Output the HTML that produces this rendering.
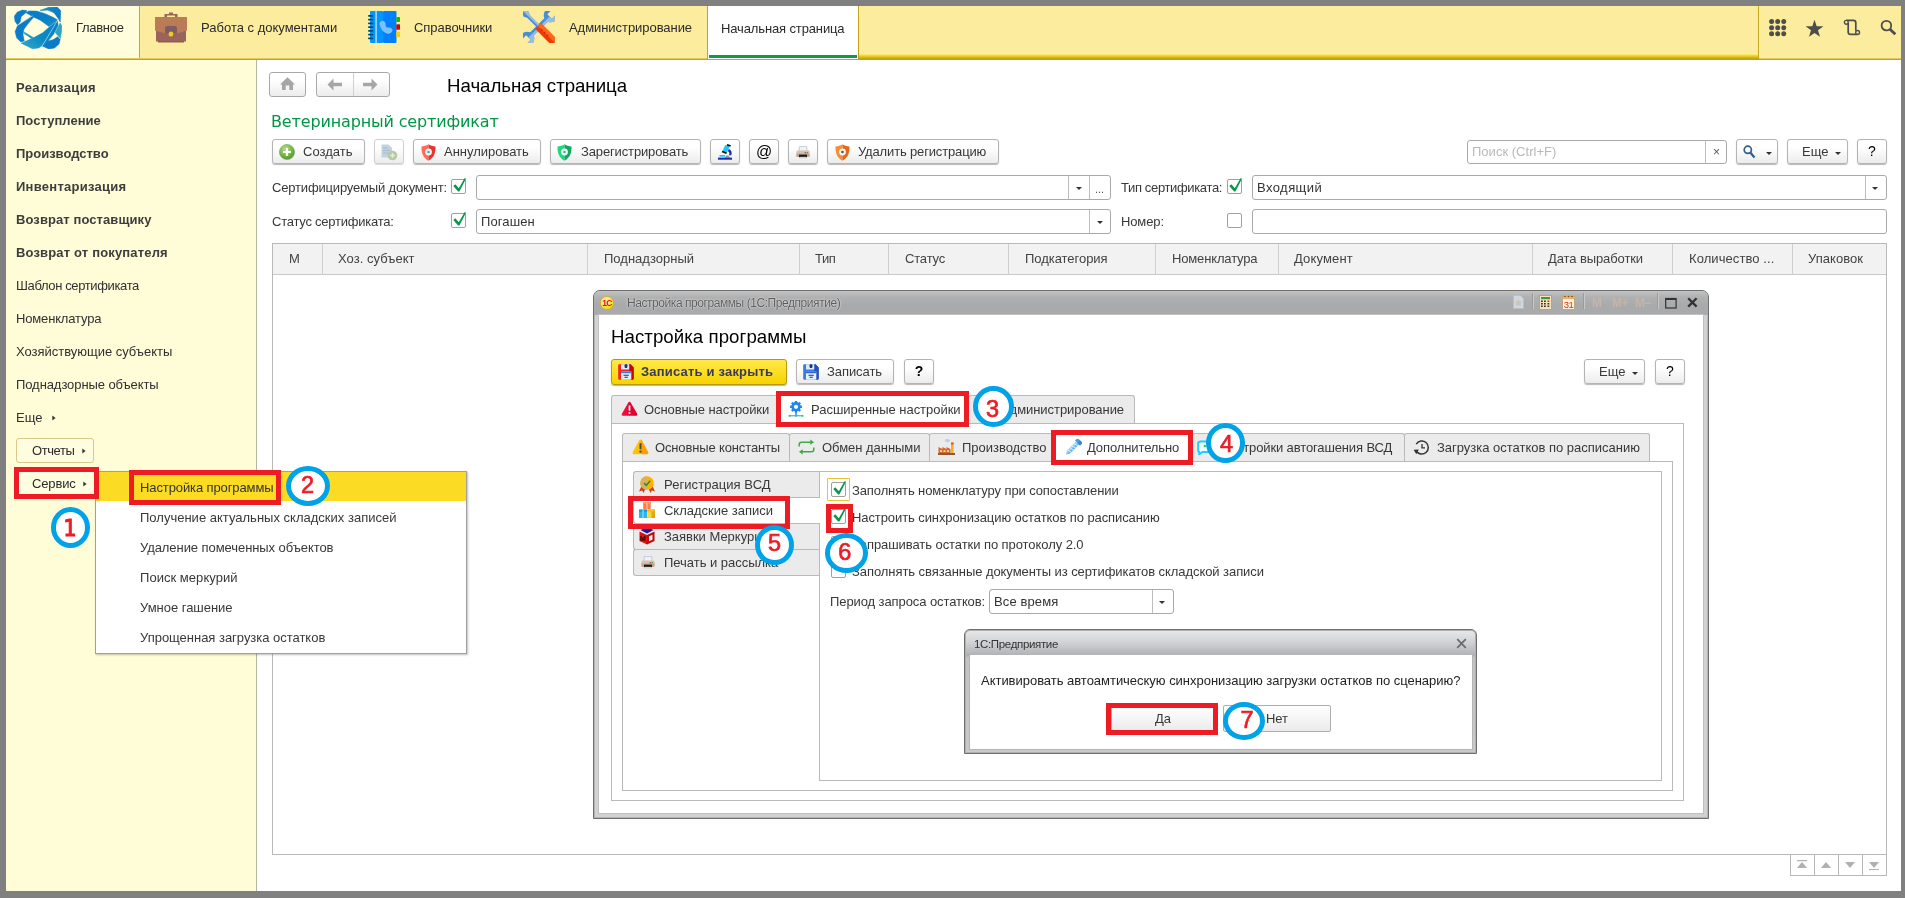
<!DOCTYPE html>
<html lang="ru"><head><meta charset="utf-8"><title>1С:Предприятие – Меркурий</title>
<style>
*{box-sizing:border-box;margin:0;padding:0}
html,body{width:1905px;height:898px;overflow:hidden;background:#808080}
body{position:relative;font-family:"Liberation Sans",sans-serif;font-size:13px;color:#2b2b2b;line-height:15px}
.a{position:absolute;white-space:nowrap}
#app{left:6px;top:6px;width:1895px;height:885px;background:#fff;overflow:hidden;will-change:transform}
/* top bar */
#top{left:0;top:0;width:1895px;height:54px;background:#fbec9e;border-bottom:1px solid #c4a21a;box-shadow:inset 0 -1px 0 #e2c95a}
#topshade{left:853px;top:48px;width:900px;height:5px;background:linear-gradient(#fdf0a8,#fadf2a 22%,#e6c81e 50%,#ccae10 80%,#b99d05)}
#main-tab{left:0;top:0;width:134px;height:52px;background:#fffddc;border-right:1px solid #c9a920}
.sec{top:14px;height:16px;line-height:16px;color:#2b2b2b}
#home-tab{left:701px;top:0;width:152px;height:53px;background:#fff;border-left:1px solid #c4a21a;border-right:1px solid #c4a21a}
#home-tab i{position:absolute;left:1px;right:1px;bottom:1px;height:3px;background:#0e9b45}
#tools{left:1752px;top:0;width:143px;height:52px;border-left:1px solid #c9a920}
/* sidebar */
#side{left:0;top:54px;width:251px;height:831px;background:#fffdd7;border-right:1px solid #b5b5a0}
.nav{left:10px;height:16px;line-height:16px;color:#303030}
.nav.b{font-weight:bold;color:#3d3d3d}
.sbtn{height:25px;border:1px solid #d9c98a;border-radius:3px;background:#fffde0;line-height:23px;padding-left:15px}
.tri{display:inline-block;margin-left:7px;vertical-align:1px}

/* main */
.btn{height:25px;border:1px solid #b4b4b4;border-radius:3px;background:linear-gradient(#fff 30%,#ececec);box-shadow:0 1px 1px rgba(0,0,0,.28);line-height:23px;color:#383838}
.btn.dis{border-color:#cfcfcf;box-shadow:0 1px 1px rgba(0,0,0,.15)}
.h1{font-size:18.67px;line-height:22px;color:#000}
.fld{height:25px;border:1px solid #a9a9a9;border-radius:3px;background:#fff;line-height:23px;padding-left:4px;color:#333}
.fld u{position:absolute;top:0;bottom:0;width:1px;background:#bdbdbd}
.dd{position:absolute;margin-top:1px;width:0;height:0;border-top:3.5px solid #333;border-left:3px solid transparent;border-right:3px solid transparent}
.lbl{height:16px;line-height:16px;color:#383838}
.cb{width:15px;height:15px;border:1px solid #a0a0a0;border-radius:2px;background:#fff}
.cb svg{position:absolute;left:0;top:-3px}
#grid{left:266px;top:237px;width:1615px;height:612px;border:1px solid #b9b9b9;background:#fff}
#ghead{left:267px;top:238px;width:1613px;height:31px;background:#f2f2f2;border-bottom:1px solid #c9c9c9}
.th{top:245px;height:16px;line-height:16px;color:#424242}
.vs{top:238px;width:1px;height:31px;background:#cfcfcf}
.sb{top:849px;width:25px;height:21px;border:1px solid #b9b9b9;border-top:none;background:#fff}
#vet{font-family:"DejaVu Sans",sans-serif;font-size:16px;line-height:20px;color:#009646;letter-spacing:-.2px}

/* modal */
#win{left:587px;top:284px;width:1116px;height:529px;border:1px solid #6f6f6f;border-radius:7px 7px 0 0;background:#d2d2d2;box-shadow:inset 0 0 0 1px #b4b4b4}
#wtitle{left:588px;top:285px;width:1114px;height:24px;border-radius:6px 6px 0 0;background:linear-gradient(#c3c3c4,#b0b1b2 25%,#a9aaac 60%,#a9aaac)}
#wbody{left:593px;top:309px;width:1104px;height:498px;background:#fff;box-shadow:0 0 0 1px #c0c0c0}
.tab{height:28px;border:1px solid #b9b9b9;border-bottom:none;border-radius:3px 3px 0 0;background:#ebebeb;line-height:27px;color:#383838}
.tab.on{background:#fff}
.pan{border:1px solid #b9b9b9;background:#fff}
.vtab{left:627px;width:186px;height:27px;border:1px solid #b9b9b9;border-right:none;border-radius:3px 0 0 3px;background:#ebebeb;line-height:25px;padding-left:30px;color:#383838}
.ybtn{height:26px;border:1px solid #b89a00;border-radius:3px;background:linear-gradient(#ffe94a,#f8d300);box-shadow:0 1px 1px rgba(0,0,0,.3);line-height:24px;color:#3a3a58;font-weight:bold}
#dlg{left:958px;top:623px;width:513px;height:125px;border:1px solid #6f6f6f;border-radius:6px 6px 0 0;background:linear-gradient(#e8e9ea,#d2d3d5 12px,#b4b5b8 24px,#acadb0 26px,#c2c2c2 27px,#c9c9c9);box-shadow:inset 0 0 0 1px #b0b0b0}
#dbody{left:964px;top:649px;width:502px;height:94px;background:#fff;box-shadow:0 0 0 1px #b5b5b5}
.nbtn{height:27px;border:1px solid #adadad;border-radius:2px;background:linear-gradient(#fff,#ebebeb);line-height:25px;text-align:center;color:#383838}
/* menu */
#menu{left:89px;top:465px;width:372px;height:183px;background:#fff;border:1px solid #9f9f9f;box-shadow:1px 1px 2px rgba(0,0,0,.25)}
.mi{left:134px;height:16px;line-height:16px;color:#383838}

/* annotations */
.rr{border:5px solid #ed1c24}
.cc{border:5px solid #00a2e8;border-radius:50%;background:#fff}
.dg{color:#ed1c24;font-weight:normal;-webkit-text-stroke:.7px #ed1c24;font-size:23.5px;line-height:24px;width:30px;height:24px;text-align:center;font-family:"Liberation Sans",sans-serif}
</style></head><body>
<div id="app" class="a">
<!--TOP-->
<div id="top" class="a"></div>
<div id="topshade" class="a"></div>
<div id="main-tab" class="a"></div>
<div class="a sec" style="left:70px"><span class="ls" style="letter-spacing:-0.295px">Главное</span></div>
<div class="a sec" style="left:195px"><span class="ls" style="letter-spacing:0.004px">Работа с документами</span></div>
<div class="a sec" style="left:408px"><span class="ls" style="letter-spacing:-0.047px">Справочники</span></div>
<div class="a sec" style="left:563px"><span class="ls" style="letter-spacing:-0.054px">Администрирование</span></div>
<div id="home-tab" class="a"><i></i></div>
<div class="a sec" style="left:715px;top:14.5px"><span class="ls" style="letter-spacing:-0.129px">Начальная страница</span></div>
<div id="tools" class="a"></div>
<!--SIDE-->
<div id="side" class="a"></div>
<div class="a nav b" style="top:73.5px"><span class="ls" style="letter-spacing:0.394px">Реализация</span></div>
<div class="a nav b" style="top:106.5px"><span class="ls" style="letter-spacing:0.028px">Поступление</span></div>
<div class="a nav b" style="top:139.5px"><span class="ls" style="letter-spacing:-0.011px">Производство</span></div>
<div class="a nav b" style="top:172.5px"><span class="ls" style="letter-spacing:0.268px">Инвентаризация</span></div>
<div class="a nav b" style="top:205.5px"><span class="ls" style="letter-spacing:0.088px">Возврат поставщику</span></div>
<div class="a nav b" style="top:238.5px"><span class="ls" style="letter-spacing:0.164px">Возврат от покупателя</span></div>
<div class="a nav" style="top:272px"><span class="ls" style="letter-spacing:-0.368px">Шаблон сертификата</span></div>
<div class="a nav" style="top:305px"><span class="ls" style="letter-spacing:-0.159px">Номенклатура</span></div>
<div class="a nav" style="top:338px"><span class="ls" style="letter-spacing:-0.017px">Хозяйствующие субъекты</span></div>
<div class="a nav" style="top:371px"><span class="ls" style="letter-spacing:-0.082px">Поднадзорные объекты</span></div>
<div class="a nav" style="top:404px">Еще<svg class="tri" style="margin-left:9.5px" width="4" height="6" viewBox="0 0 4 6"><path d="M.3 .4 L3.6 3 L.3 5.600 Z" fill="#333"/></svg></div>
<div class="a sbtn" style="left:10px;top:432px;width:78px"><span class="ls" style="letter-spacing:-0.408px">Отчеты</span><svg class="tri" width="4" height="6" viewBox="0 0 4 6"><path d="M.3 .4 L3.6 3 L.3 5.600 Z" fill="#333"/></svg></div>
<div class="a sbtn" style="left:10px;top:465px;width:82px;border-color:transparent"><span class="ls" style="letter-spacing:-0.146px">Сервис</span><svg class="tri" width="4" height="6" viewBox="0 0 4 6"><path d="M.3 .4 L3.6 3 L.3 5.600 Z" fill="#333"/></svg></div>

<div class="a btn" style="left:263px;top:66px;width:37px;box-shadow:none;border-color:#a8a8a8"></div>
<div class="a btn" style="left:310px;top:66px;width:74px;box-shadow:none;border-color:#a8a8a8"><u style="position:absolute;left:36px;top:0;bottom:0;width:1px;background:#d0d0d0"></u></div>
<div class="a h1" style="left:441px;top:69px"><span class="ls" style="letter-spacing:-0.027px">Начальная страница</span></div>
<div class="a" id="vet" style="left:265px;top:105.5px"><span class="ls" style="letter-spacing:-0.142px">Ветеринарный сертификат</span></div>
<div class="a btn" style="left:266px;top:133px;width:93px;padding-left:30px"><span class="ls" style="letter-spacing:0.024px">Создать</span></div>
<div class="a btn dis" style="left:368px;top:133px;width:30px"></div>
<div class="a btn" style="left:407px;top:133px;width:128px;padding-left:30px"><span class="ls" style="letter-spacing:-0.017px">Аннулировать</span></div>
<div class="a btn" style="left:544px;top:133px;width:151px;padding-left:30px"><span class="ls" style="letter-spacing:-0.139px">Зарегистрировать</span></div>
<div class="a btn" style="left:704px;top:133px;width:30px"></div>
<div class="a btn" style="left:743px;top:133px;width:30px;text-align:center;color:#000;font-size:16px;line-height:23px">@</div>
<div class="a btn" style="left:782px;top:133px;width:30px"></div>
<div class="a btn" style="left:821px;top:133px;width:172px;padding-left:30px"><span class="ls" style="letter-spacing:-0.155px">Удалить регистрацию</span></div>
<div class="a fld" style="left:1461px;top:134px;width:260px;height:24px;line-height:22px;color:#b9b9b9"><span class="ls" style="letter-spacing:0.019px">Поиск (Ctrl+F)</span><u style="left:237px"></u><span class="a" style="left:245px;top:0;color:#555;font-size:12px">×</span></div>
<div class="a btn" style="left:1730px;top:133px;width:42px"><span class="dd" style="left:29px;top:11px"></span></div>
<div class="a btn" style="left:1781px;top:133px;width:61px;padding-left:14px">Еще<span class="dd" style="left:47px;top:11px"></span></div>
<div class="a btn" style="left:1851px;top:133px;width:30px;text-align:center;color:#000;font-size:14px">?</div>

<div class="a lbl" style="left:266px;top:174px"><span class="ls" style="letter-spacing:-0.172px">Сертифицируемый документ:</span></div>
<div class="a cb" style="left:445px;top:173px"><svg width="16" height="17" viewBox="0 0 16 17"><path d="M1.300 9 L3.300 7.300 L6.800 11.300 L12.700 1 L14 1.800 L7.400 14.400 L6.100 14.400 Z" fill="#0a9647"/></svg></div>
<div class="a fld" style="left:470px;top:169px;width:635px"><u style="left:591px"></u><u style="left:612px"></u><span class="dd" style="left:599px;top:10px"></span><span class="a" style="left:618px;top:2px;color:#555;font-size:11px">...</span></div>
<div class="a lbl" style="left:1115px;top:174px"><span class="ls" style="letter-spacing:-0.354px">Тип сертификата:</span></div>
<div class="a cb" style="left:1221px;top:173px"><svg width="16" height="17" viewBox="0 0 16 17"><path d="M1.300 9 L3.300 7.300 L6.800 11.300 L12.700 1 L14 1.800 L7.400 14.400 L6.100 14.400 Z" fill="#0a9647"/></svg></div>
<div class="a fld" style="left:1246px;top:169px;width:635px"><span class="ls" style="letter-spacing:0.433px">Входящий</span><u style="left:612px"></u><span class="dd" style="left:619px;top:10px"></span></div>

<div class="a lbl" style="left:266px;top:208px"><span class="ls" style="letter-spacing:-0.24px">Статус сертификата:</span></div>
<div class="a cb" style="left:445px;top:207px"><svg width="16" height="17" viewBox="0 0 16 17"><path d="M1.300 9 L3.300 7.300 L6.800 11.300 L12.700 1 L14 1.800 L7.400 14.400 L6.100 14.400 Z" fill="#0a9647"/></svg></div>
<div class="a fld" style="left:470px;top:203px;width:635px"><span class="ls" style="letter-spacing:0.115px">Погашен</span><u style="left:612px"></u><span class="dd" style="left:620px;top:10px"></span></div>
<div class="a lbl" style="left:1115px;top:208px"><span class="ls" style="letter-spacing:-0.128px">Номер:</span></div>
<div class="a cb" style="left:1221px;top:207px"></div>
<div class="a fld" style="left:1246px;top:203px;width:635px"></div>

<div class="a" id="grid"></div>
<div class="a" id="ghead"></div>
<div class="a th" style="left:283px">М</div>
<div class="a th" style="left:332px"><span class="ls" style="letter-spacing:0.036px">Хоз. субъект</span></div>
<div class="a th" style="left:598px"><span class="ls" style="letter-spacing:0.01px">Поднадзорный</span></div>
<div class="a th" style="left:809px"><span class="ls" style="letter-spacing:-0.436px">Тип</span></div>
<div class="a th" style="left:899px"><span class="ls" style="letter-spacing:-0.162px">Статус</span></div>
<div class="a th" style="left:1019px"><span class="ls" style="letter-spacing:-0.041px">Подкатегория</span></div>
<div class="a th" style="left:1166px"><span class="ls" style="letter-spacing:-0.15px">Номенклатура</span></div>
<div class="a th" style="left:1288px"><span class="ls" style="letter-spacing:0.147px">Документ</span></div>
<div class="a th" style="left:1542px"><span class="ls" style="letter-spacing:-0.1px">Дата выработки</span></div>
<div class="a th" style="left:1683px"><span class="ls" style="letter-spacing:0.08px">Количество ...</span></div>
<div class="a th" style="left:1802px"><span class="ls" style="letter-spacing:0.045px">Упаковок</span></div>
<div class="a vs" style="left:316px"></div><div class="a vs" style="left:581px"></div><div class="a vs" style="left:793px"></div><div class="a vs" style="left:882px"></div><div class="a vs" style="left:1002px"></div><div class="a vs" style="left:1149px"></div><div class="a vs" style="left:1272px"></div><div class="a vs" style="left:1526px"></div><div class="a vs" style="left:1666px"></div><div class="a vs" style="left:1786px"></div>
<div class="a sb" style="left:1784px"></div><div class="a sb" style="left:1808px"></div><div class="a sb" style="left:1832px"></div><div class="a sb" style="left:1856px"></div>
<!--ICONS-TOP-START-->
<svg class="a" style="left:8px;top:1px" width="48" height="42" viewBox="0 0 48 42"><defs>
<linearGradient id="lgA" x1="0" y1="1" x2="1" y2="0"><stop offset="0" stop-color="#34acc6"/><stop offset=".45" stop-color="#0b8ac6"/><stop offset="1" stop-color="#0a7cc8"/></linearGradient>
<linearGradient id="lgB" x1="0" y1="0" x2="1" y2="1"><stop offset="0" stop-color="#0a7cc8"/><stop offset=".6" stop-color="#0a80c8"/><stop offset="1" stop-color="#1595c6"/></linearGradient>
<linearGradient id="lgC" x1="0" y1="0" x2="1" y2="0"><stop offset="0" stop-color="#2ba6c6"/><stop offset=".5" stop-color="#0c84c8"/><stop offset="1" stop-color="#0a7cc8"/></linearGradient></defs>
<g stroke-linejoin="round" stroke-width=".5">
<path d="M12.9 3.6 L8.2 3.1 L3.1 5.2 L0.3 9.3 L1.1 14.4 L3.6 18 L6.2 14.9 L7.2 9.8 L11.8 5.7 Z" fill="#0a7cc8" stroke="#0a7cc8"/>
<path d="M3.6 18.5 L18 9 L19.5 10.3 L13.4 17.5 L9.8 22.6 L9 27.7 L10.3 33.9 L6.7 34.9 L2.6 30.8 L1.1 24.6 Z" fill="#0a7cc8" stroke="#0a7cc8"/>
<path d="M11.8 5.7 L14.9 3.9 L22.6 4.1 L31.3 6.7 L39 10.3 L43.6 12.9 L34.9 19.5 L26.7 13.4 L19.5 10 Z" fill="url(#lgB)" stroke="#0a80c8"/>
<path d="M43.6 13.4 L44.1 18.5 L40 26.7 L32.8 35.4 L24.6 41 L18.5 41.8 L7.2 36.2 L19.5 30.8 L28.7 25.7 L35.9 19.5 Z" fill="url(#lgA)" stroke="#0b86c7" stroke-width=".4"/>
<path d="M10 24.9 L19.5 30.5 L17.5 31.8 L14.9 29.8 L10.3 26.7 Z" fill="#189ac6" stroke="#189ac6" stroke-width=".4"/>
<path d="M26.2 3.4 L34.9 0.3 L43.1 0 L46.7 3.6 L46.2 14.9 L44.1 11.3 L40 5.7 L33.9 3.1 Z" fill="url(#lgC)" stroke="#0b80c8" stroke-width=".6"/>
<path d="M46.2 15.9 L48 19.5 L47.2 26.7 L46.2 31.8 L41 25.7 L44.1 20 Z" fill="#2ba6c2" stroke="#2ba6c2" stroke-width=".6"/>
<path d="M28.2 39 L33.9 33.9 L39 32.8 L43.6 29.8 L46.2 32.3 L45.1 36.9 L40.5 41 L34.9 42 Z" fill="#0a7cc8" stroke="#0a7cc8"/></g><path d="M3.2 18.4 L18.6 8.8 M28 39.300 L44 12.600 M40.500 25.400 L46.500 32.200" stroke="#f4fbf0" stroke-width=".55" fill="none"/></svg>
<svg class="a" style="left:149px;top:6px" width="32" height="31" viewBox="0 0 32 31"><path d="M9.5 5.5 V2 H14 V.5 H18 V2 H22.5 V5.5 H20 V3.5 H12 V5.5 Z" fill="#9a6458"/>
<rect x="1" y="18" width="30" height="11.5" fill="#9a645a"/><rect x="3" y="29" width="26" height="1.5" fill="#8f5a52"/>
<path d="M0 5 H32 V18.5 L21.5 21.5 H10.5 L0 18.5 Z" fill="#ba7b57"/>
<path d="M10 21.5 V16 Q10 14 12 14 H20 Q22 14 22 16 V21.5 Z" fill="#7f5c62"/>
<ellipse cx="16" cy="22" rx="2.3" ry="2.6" fill="#f7c91c"/></svg>
<svg class="a" style="left:362px;top:5px" width="32" height="32" viewBox="0 0 32 32"><rect x="2" y="0" width="13" height="32" rx="1" fill="#0096ff"/><rect x="15" y="0" width="13.5" height="32" rx="1" fill="#0080ff"/>
<rect x="7.3" y="0" width="1.6" height="32" fill="#a6d4ff"/>
<g fill="#004a75"><rect x="0" y="4.1" width="5.3" height="1.7" rx=".8"/><rect x="0" y="7.8" width="5.3" height="1.7" rx=".8"/><rect x="0" y="11.6" width="5.3" height="1.7" rx=".8"/><rect x="0" y="15.3" width="5.3" height="1.7" rx=".8"/><rect x="0" y="19.1" width="5.3" height="1.7" rx=".8"/><rect x="0" y="22.8" width="5.3" height="1.7" rx=".8"/><rect x="0" y="26.6" width="5.3" height="1.7" rx=".8"/></g>
<rect x="28.3" y="6" width="3.7" height="5" rx=".8" fill="#00c400"/><rect x="28.3" y="13.2" width="3.7" height="5.6" rx=".8" fill="#d80000"/><rect x="28.3" y="20.8" width="3.7" height="5.2" rx=".8" fill="#ffcc00"/>
<path d="M11.6 13.2 C11.2 11 12.8 9.8 14.8 9.8 C16.6 10 17.6 11.6 17.6 13.4 C17.4 15 18.4 16.6 20.2 16.6 C22.2 16 24 17 24.6 19 C24.2 21.6 21.6 23.2 19.6 22.8 C15.6 21.8 12.4 17.8 11.6 13.2 Z" fill="#7cc0ff"/></svg>
<svg class="a" style="left:517px;top:5px" width="32" height="32" viewBox="0 0 32 32"><g transform="rotate(45 16 16)"><path d="M13.2 -5 H18.8 V4 H13.2 Z" fill="#fbec9e"/>
<path d="M9 -4.5 C8 0 9.5 4.5 13.6 6 V26 C9.5 27.5 8 32 9 36.500 H12.800 V31 H19.200 V36.500 H23 C24 32 22.500 27.500 18.400 26 V6 C22.500 4.500 24 0 23 -4.500 H19.200 V1 H12.800 V-4.500 Z" fill="#428fe0"/>
<path d="M16 1 H19.200 V-4.500 H23 C24 0 22.500 4.500 18.400 6 V26 C22.500 27.500 24 32 23 36.500 H19.200 V31 H16 Z" fill="#9bbce0"/></g>
<g transform="rotate(-45 16 16)"><path d="M13.500 -6 H18.500 L19.500 -2 L17.800 1 V15 H14.200 V1 L12.500 -2 Z" fill="#428fe0"/><path d="M16 -6 H18.500 L19.500 -2 L17.800 1 V15 H16 Z" fill="#9bbce0"/>
<path d="M12 14.500 H20 V35 L17.500 38 H14.500 L12 35 Z" fill="#f03800"/><path d="M16 14.500 H20 V35 L17.500 38 H16 Z" fill="#ff6618"/>
<circle cx="16" cy="20" r=".9" fill="#c82800"/><circle cx="16" cy="24" r=".9" fill="#c82800"/><circle cx="16" cy="28" r=".9" fill="#c82800"/></g></svg>
<svg class="a" style="left:1763px;top:13px" width="18" height="18" viewBox="0 0 18 18"><g fill="#4d4d4d"><circle cx="2.6" cy="2.6" r="2.5"/><circle cx="2.6" cy="8.7" r="2.5"/><circle cx="2.6" cy="14.8" r="2.5"/><circle cx="8.7" cy="2.6" r="2.5"/><circle cx="8.7" cy="8.7" r="2.5"/><circle cx="8.7" cy="14.8" r="2.5"/><circle cx="14.8" cy="2.6" r="2.5"/><circle cx="14.8" cy="8.7" r="2.5"/><circle cx="14.8" cy="14.8" r="2.5"/></g></svg>
<svg class="a" style="left:1799px;top:13px" width="19" height="18" viewBox="0 0 19 18"><path d="M9.500 .8 L11.700 7.200 L18.400 7.300 L13 11.300 L15 17.700 L9.500 13.900 L4 17.700 L6 11.300 L.6 7.300 L7.300 7.200 Z" fill="#4d4d4d"/></svg>
<svg class="a" style="left:1837px;top:13px" width="18" height="17" viewBox="0 0 18 17"><path d="M3.300 1.400 H10.500 Q12.800 1.400 12.800 3.800 V11.800 M5.200 3.600 V13 Q5.200 15.400 7.600 15.400 H14.800" fill="none" stroke="#4d4d4d" stroke-width="1.700"/><circle cx="3.300" cy="3.300" r="1.900" fill="#fbec9e" stroke="#4d4d4d" stroke-width="1.400"/><circle cx="14.600" cy="13.400" r="1.900" fill="#fbec9e" stroke="#4d4d4d" stroke-width="1.400"/></svg>
<svg class="a" style="left:1874px;top:13px" width="17" height="17" viewBox="0 0 17 17"><circle cx="6.400" cy="6.600" r="4.800" fill="none" stroke="#4d4d4d" stroke-width="1.800"/><path d="M10 10.300 L15.300 15.300" stroke="#4d4d4d" stroke-width="2.800"/></svg>
<svg class="a" style="left:273px;top:71px" width="17" height="14" viewBox="0 0 17 14"><path d="M8.500 .3 L16 7.600 H14 V13 H10.300 V8.600 H6.700 V13 H3 V7.600 H1 Z" fill="#a6a6a6"/></svg>
<svg class="a" style="left:321px;top:72px" width="16" height="13" viewBox="0 0 16 13"><path d="M.5 6.500 L6.500 .5 V4.800 H15 V8.200 H6.500 V12.500 Z" fill="#a6a6a6"/></svg>
<svg class="a" style="left:356px;top:72px" width="16" height="13" viewBox="0 0 16 13"><path d="M15.500 6.500 L9.500 .5 V4.800 H1 V8.200 H9.500 V12.500 Z" fill="#a6a6a6"/></svg>
<svg class="a" style="left:273px;top:138px" width="16" height="16" viewBox="0 0 16 16"><defs><radialGradient id="gc" cx=".4" cy=".3" r=".8"><stop offset="0" stop-color="#b7e08a"/><stop offset=".6" stop-color="#6db33f"/><stop offset="1" stop-color="#4a8f2a"/></radialGradient></defs><circle cx="8" cy="8" r="7.600" fill="url(#gc)" stroke="#7f9f6a" stroke-width=".6"/><path d="M8 4 V12 M4 8 H12" stroke="#fff" stroke-width="2.200"/></svg>
<svg class="a" style="left:375px;top:138px" width="17" height="17" viewBox="0 0 17 17"><path d="M.5 .5 H7.500 L11 4 V13.500 H.5 Z" fill="#c3d2e0"/><path d="M2 4 H7 M2 6.500 H9 M2 9 H9" stroke="#a9bccd" stroke-width="1"/><circle cx="11.500" cy="11.500" r="4.800" fill="#b4c9a4"/><path d="M11.500 9 V14 M9 11.500 H14" stroke="#e4ecdc" stroke-width="1.600"/></svg>
<svg class="a" style="left:415px;top:138px" width="15" height="17" viewBox="0 0 15 17"><path d="M7.500 .3 C5.500 1.800 3 2.300 .5 2.400 C.3 8.500 1.800 13.500 7.500 16.700 Z" fill="#ff6b5b"/><path d="M7.500 .3 C9.500 1.800 12 2.300 14.500 2.400 C14.700 8.500 13.200 13.500 7.500 16.700 Z" fill="#e8352b"/><circle cx="7.500" cy="8" r="3.400" fill="#f4f4f4"/><circle cx="7.500" cy="8" r="1.300" fill="#4aa9b8"/></svg>
<svg class="a" style="left:551px;top:138px" width="15" height="17" viewBox="0 0 15 17"><path d="M7.500 .3 C5.500 1.800 3 2.300 .5 2.400 C.3 8.500 1.800 13.500 7.500 16.700 Z" fill="#1ed97a"/><path d="M7.500 .3 C9.500 1.800 12 2.300 14.500 2.400 C14.700 8.500 13.200 13.500 7.500 16.700 Z" fill="#0fa860"/><circle cx="7.500" cy="8" r="3.400" fill="#f4f4f4"/><circle cx="7.500" cy="8" r="1.300" fill="#4aa9b8"/></svg>
<svg class="a" style="left:829px;top:138px" width="15" height="17" viewBox="0 0 15 17"><path d="M7.500 .3 C5.500 1.800 3 2.300 .5 2.400 C.3 8.500 1.800 13.500 7.500 16.700 Z" fill="#f09038"/><path d="M7.500 .3 C9.500 1.800 12 2.300 14.500 2.400 C14.700 8.500 13.200 13.500 7.500 16.700 Z" fill="#e06a1c"/><circle cx="7.500" cy="8" r="3.400" fill="#f4f4f4"/><circle cx="7.500" cy="8" r="1.300" fill="#555"/></svg>
<svg class="a" style="left:711px;top:138px" width="16" height="17" viewBox="0 0 16 17"><path d="M8.300 .9 L12.800 2.600 L9.500 9.300 L5.200 7.600 Z" fill="#1ec8f5"/><path d="M10.300 0 L14 1.300 L13.300 2.800 L9.600 1.500 Z" fill="#111"/><path d="M5.400 6.700 L9.900 8.500 L9.200 10 L4.800 8.200 Z" fill="#111"/><path d="M11.800 5 C14.500 5.800 15.300 8.500 14.300 11.300 L12 11.300 C12.800 9.300 12.300 7.800 10.800 7.200 Z" fill="#1c2cb0"/><rect x="2.500" y="11" width="5.600" height="1.700" fill="#1ec8f5"/><path d="M7.800 13.700 L9.200 11.600 H11.600 L12.800 13.700 Z" fill="#8a9a9a"/><rect x="1" y="13.600" width="14" height="2.100" fill="#1c2cb0"/></svg>
<svg class="a" style="left:790px;top:140px" width="14" height="13" viewBox="0 0 14 13"><rect x="3.200" y=".4" width="7.600" height="5" rx=".6" fill="#edf3fa" stroke="#aebccc" stroke-width=".7"/><path d="M1.600 4.600 H12.400 Q13.600 4.600 13.600 6 V10 Q13.600 11 12.400 11 H1.600 Q.4 11 .4 10 V6 Q.4 4.600 1.600 4.600 Z" fill="#d6c2b1"/><path d="M.4 7.500 H13.600 V10 Q13.600 11 12.400 11 H1.600 Q.4 11 .4 10 Z" fill="#bfa796"/><circle cx="9.300" cy="6.700" r=".75" fill="#e83020"/><circle cx="11.300" cy="6.700" r=".75" fill="#30a030"/><rect x="3" y="8.600" width="8" height="2.700" fill="#1c1c1c"/><rect x="3.400" y="11.200" width="7.200" height="1.600" rx=".5" fill="#f4f4f4" stroke="#c4c4c4" stroke-width=".5"/></svg>
<svg class="a" style="left:1737px;top:139px" width="13" height="14" viewBox="0 0 13 14"><circle cx="4.800" cy="4.800" r="3.600" fill="none" stroke="#2f5f8f" stroke-width="1.700"/><path d="M7.500 7.800 L11.500 12.500" stroke="#2f5f8f" stroke-width="2.200"/></svg>
<!--ICONS-TOP-->
<!--MAIN-->

<div class="a" id="win"></div>
<div class="a" id="wtitle"></div>
<div class="a" style="left:621px;top:290px;font-size:12px;line-height:14px;color:#5c5c5c;text-shadow:0 0 2px #e8e8e8,0 0 1px #e8e8e8;letter-spacing:-.45px"><span class="ls" style="letter-spacing:-0.438px">Настройка программы  (1С:Предприятие)</span></div>
<div class="a" id="wbody"></div>
<div class="a h1" style="left:605px;top:320px"><span class="ls" style="letter-spacing:0.05px">Настройка программы</span></div>
<div class="a ybtn" style="left:605px;top:353px;width:176px;padding-left:29px"><span class="ls" style="letter-spacing:0.192px">Записать и закрыть</span></div>
<div class="a btn" style="left:790px;top:353px;width:98px;padding-left:30px"><span class="ls" style="letter-spacing:-0.066px">Записать</span></div>
<div class="a btn" style="left:898px;top:353px;width:30px;text-align:center;color:#000;font-weight:bold;font-size:14px">?</div>
<div class="a btn" style="left:1578px;top:353px;width:61px;padding-left:14px">Еще<span class="dd" style="left:47px;top:11px"></span></div>
<div class="a btn" style="left:1649px;top:353px;width:30px;text-align:center;color:#000;font-size:14px">?</div>

<div class="a pan" style="left:605px;top:417px;width:1073px;height:378px"></div>
<div class="a tab" style="left:605px;top:389px;width:167px;padding-left:32px"><span class="ls" style="letter-spacing:-0.096px">Основные настройки</span></div>
<div class="a tab" style="left:962px;top:389px;width:167px;padding-left:32px"><span class="ls" style="letter-spacing:-0.054px">Администрирование</span></div>
<div class="a tab on" style="left:771px;top:389px;width:192px;height:29px;padding-left:33px"><span class="ls" style="letter-spacing:-0.03px">Расширенные настройки</span></div>

<div class="a pan" style="left:616px;top:455px;width:1051px;height:330px"></div>
<div class="a tab" style="left:616px;top:427px;width:168px;padding-left:32px"><span class="ls" style="letter-spacing:-0.139px">Основные константы</span></div>
<div class="a tab" style="left:783px;top:427px;width:141px;padding-left:32px"><span class="ls" style="letter-spacing:-0.038px">Обмен данными</span></div>
<div class="a tab" style="left:923px;top:427px;width:124px;padding-left:32px"><span class="ls" style="letter-spacing:-0.024px">Производство</span></div>
<div class="a tab" style="left:1186px;top:427px;width:213px;padding-left:27.5px"><span class="ls" style="letter-spacing:-0.126px">Настройки автогашения ВСД</span></div>
<div class="a tab" style="left:1398px;top:427px;width:246px;padding-left:32px"><span class="ls" style="letter-spacing:-0.012px">Загрузка остатков по расписанию</span></div>
<div class="a tab on" style="left:1046px;top:427px;width:141px;height:29px;padding-left:34px"><span class="ls" style="letter-spacing:-0.107px">Дополнительно</span></div>

<div class="a pan" style="left:813px;top:465px;width:843px;height:310px"></div>
<div class="a vtab" style="top:465px"><span class="ls" style="letter-spacing:0.06px">Регистрация ВСД</span></div>
<div class="a vtab" style="top:517px"><span class="ls" style="letter-spacing:-0.019px">Заявки Меркурий</span></div>
<div class="a vtab" style="top:543px"><span class="ls" style="letter-spacing:-0.023px">Печать и рассылка</span></div>
<div class="a vtab" style="top:491px;background:#fff;width:187px"><span class="ls" style="letter-spacing:-0.018px">Складские записи</span></div>

<div class="a" style="left:821px;top:472px;width:23px;height:23px;border:1px solid #eac435;border-radius:1px"></div>
<div class="a cb" style="left:825px;top:476px"><svg width="16" height="17" viewBox="0 0 16 17"><path d="M1.300 9 L3.300 7.300 L6.800 11.300 L12.700 1 L14 1.800 L7.400 14.400 L6.100 14.400 Z" fill="#0a9647"/></svg></div>
<div class="a lbl" style="left:846px;top:476.5px"><span class="ls" style="letter-spacing:-0.109px">Заполнять номенклатуру при сопоставлении</span></div>
<div class="a cb" style="left:825px;top:503px"><svg width="16" height="17" viewBox="0 0 16 17"><path d="M1.300 9 L3.300 7.300 L6.800 11.300 L12.700 1 L14 1.800 L7.400 14.400 L6.100 14.400 Z" fill="#0a9647"/></svg></div>
<div class="a lbl" style="left:846px;top:503.5px"><span class="ls" style="letter-spacing:-0.09px">Настроить синхронизацию остатков по расписанию</span></div>
<div class="a cb" style="left:825px;top:530px"></div>
<div class="a lbl" style="left:846px;top:530.5px"><span class="ls" style="letter-spacing:-0.069px">Запрашивать остатки по протоколу 2.0</span></div>
<div class="a cb" style="left:825px;top:557px"></div>
<div class="a lbl" style="left:846px;top:557.5px"><span class="ls" style="letter-spacing:-0.067px">Заполнять связанные документы из сертификатов складской записи</span></div>
<div class="a lbl" style="left:824px;top:587.5px"><span class="ls" style="letter-spacing:-0.09px">Период запроса остатков:</span></div>
<div class="a fld" style="left:983px;top:583px;width:185px"><span class="ls" style="letter-spacing:0.118px">Все время</span><u style="left:162px"></u><span class="dd" style="left:169px;top:10px"></span></div>

<div class="a" id="dlg"></div>
<div class="a" style="left:968px;top:631px;font-size:11.5px;line-height:14px;color:#333"><span class="ls" style="letter-spacing:-0.345px">1С:Предприятие</span></div>
<div class="a" id="dbody"></div>
<div class="a lbl" style="left:975px;top:667px;color:#222"><span class="ls" style="letter-spacing:-0.026px">Активировать автоамтическую синхронизацию загрузки остатков по сценарию?</span></div>
<div class="a nbtn" style="left:1105px;top:699px;width:104px;border-bottom:1px dotted #555">Да</div>
<div class="a nbtn" style="left:1217px;top:699px;width:108px">Нет</div>
<svg class="a" style="left:594px;top:290px" width="14" height="14" viewBox="0 0 14 14"><defs><radialGradient id="g1c" cx=".4" cy=".35" r=".7"><stop offset="0" stop-color="#fff9c0"/><stop offset="1" stop-color="#f7d000"/></radialGradient></defs><circle cx="7" cy="7" r="6.600" fill="url(#g1c)" stroke="#d9a400" stroke-width=".6"/><text x="7" y="9.800" font-family="Liberation Sans,sans-serif" font-weight="bold" font-size="8.500" text-anchor="middle" fill="#e01018" letter-spacing="-.7">1С</text></svg>
<svg class="a" style="left:1507px;top:289px" width="11" height="14" viewBox="0 0 11 14"><path d="M.5 .5 H7.500 L10.500 3.500 V13.500 H.5 Z" fill="#cfd8e2" stroke="#b4c0cc" stroke-width=".6"/><path d="M5.300 3.800 L6.500 6.500 L9.300 6.700 L7.200 8.600 L7.900 11.400 L5.300 9.900 L2.700 11.400 L3.400 8.600 L1.300 6.700 L4.100 6.500 Z" fill="#cfc4b0"/></svg>
<svg class="a" style="left:1533px;top:289px" width="13" height="15" viewBox="0 0 13 15"><rect x=".5" y=".5" width="12" height="14" fill="#f6e2bd" stroke="#b89a6a" stroke-width=".8"/><rect x="2" y="2" width="9" height="2.200" fill="#3a9a3a"/><g fill="#333"><rect x="2" y="5.500" width="1.800" height="1.500"/><rect x="5" y="5.500" width="1.800" height="1.500"/><rect x="2" y="8" width="1.800" height="1.500"/><rect x="5" y="8" width="1.800" height="1.500"/><rect x="8.500" y="8" width="1.800" height="1.500"/><rect x="2" y="10.500" width="1.800" height="1.500"/><rect x="5" y="10.500" width="1.800" height="1.500"/><rect x="8.500" y="10.500" width="1.800" height="1.500"/></g><rect x="8.500" y="5.500" width="1.800" height="1.500" fill="#d22"/></svg>
<svg class="a" style="left:1556px;top:289px" width="13" height="15" viewBox="0 0 13 15"><rect x=".5" y="1.500" width="12" height="13" fill="#fff3dc" stroke="#b89a6a" stroke-width=".8"/><rect x=".5" y="1.500" width="12" height="2.600" fill="#e8b56a"/><g fill="#7a4a1a"><circle cx="3" cy="1.500" r=".8"/><circle cx="6.500" cy="1.500" r=".8"/><circle cx="10" cy="1.500" r=".8"/></g><text x="6.500" y="12.800" font-family="Liberation Sans,sans-serif" font-size="9.500" text-anchor="middle" fill="#e0281e" letter-spacing="-.5">31</text></svg>
<div class="a" style="left:1526px;top:287px;width:1px;height:16px;background:#9a9a9a;box-shadow:1px 0 0 #c9c9c9"></div>
<div class="a" style="left:1577px;top:287px;width:1px;height:16px;background:#9a9a9a;box-shadow:1px 0 0 #c9c9c9"></div>
<div class="a" style="left:1651px;top:287px;width:1px;height:16px;background:#9a9a9a;box-shadow:1px 0 0 #c9c9c9"></div>
<div class="a" style="left:1586px;top:290px;font-size:12px;line-height:14px;font-weight:bold;color:#c4b5aa;letter-spacing:-.2px">M</div><div class="a" style="left:1606px;top:290px;font-size:12px;line-height:14px;font-weight:bold;color:#c4b5aa;letter-spacing:-.6px">M+</div><div class="a" style="left:1629px;top:290px;font-size:12px;line-height:14px;font-weight:bold;color:#c4b5aa;letter-spacing:-.6px">M−</div>
<svg class="a" style="left:1659px;top:291px" width="12" height="12" viewBox="0 0 12 12"><rect x=".7" y="1.500" width="10.400" height="9.500" fill="none" stroke="#333" stroke-width="1.200"/><rect x=".7" y="1" width="10.400" height="2" fill="#333"/></svg>
<svg class="a" style="left:1681px;top:291px" width="11" height="11" viewBox="0 0 11 11"><path d="M1.200 1.200 L9.600 9.600 M9.600 1.200 L1.200 9.600" stroke="#333" stroke-width="2.300"/></svg>
<svg class="a" style="left:612px;top:358px" width="16" height="16" viewBox="0 0 16 16"><path d="M1.200 .3 H12.600 L15.700 3.400 V14.600 Q15.700 15.700 14.600 15.700 H1.200 Q.2 15.700 .2 14.600 V1.400 Q.2 .3 1.200 .3 Z" fill="#f52222"/><path d="M11.200 .3 H12.600 L15.700 3.400 V14.600 Q15.700 15.700 14.600 15.700 H11.200 Z" fill="#c40808"/><rect x="3" y=".3" width="8.200" height="5.200" fill="#dbeaf8"/><rect x="6.600" y=".3" width="2.800" height="3.800" rx="1" fill="#1c2f7a"/><rect x="3" y="7.400" width="10.300" height="8.300" fill="#e4f0fc"/><rect x="3" y="7.400" width="10.300" height="1.800" fill="#3a7be0"/><path d="M5.500 11.300 H10.800 M6.500 13.200 H9.800" stroke="#1c2f7a" stroke-width="1.100"/></svg>
<svg class="a" style="left:797px;top:358px" width="16" height="16" viewBox="0 0 16 16"><path d="M1.200 .3 H12.600 L15.700 3.400 V14.600 Q15.700 15.700 14.600 15.700 H1.200 Q.2 15.700 .2 14.600 V1.400 Q.2 .3 1.200 .3 Z" fill="#3f78e0"/><path d="M11.200 .3 H12.600 L15.700 3.400 V14.600 Q15.700 15.700 14.600 15.700 H11.200 Z" fill="#2450b8"/><rect x="3" y=".3" width="8.200" height="5.200" fill="#dbeaf8"/><rect x="6.600" y=".3" width="2.800" height="3.800" rx="1" fill="#1c2f7a"/><rect x="3" y="7.400" width="10.300" height="8.300" fill="#e4f0fc"/><rect x="3" y="7.400" width="10.300" height="1.800" fill="#2a60d0"/><path d="M5.500 11.300 H10.800 M6.500 13.200 H9.800" stroke="#1c2f7a" stroke-width="1.100"/></svg>
<svg class="a" style="left:615px;top:395px" width="17" height="15" viewBox="0 0 17 15"><defs><linearGradient id="rt" x1="0" x2="1"><stop offset="0" stop-color="#f5123f"/><stop offset="1" stop-color="#d6002b"/></linearGradient></defs><path d="M8.500 .8 Q9.300 .8 9.800 1.700 L16.300 13 Q16.800 14.600 15.200 14.700 H1.800 Q.2 14.600 .7 13 L7.200 1.700 Q7.700 .8 8.500 .8 Z" fill="url(#rt)"/><rect x="7.600" y="4.200" width="1.800" height="5.800" rx=".9" fill="#e6e6f5"/><circle cx="8.500" cy="12" r="1.100" fill="#e6e6f5"/></svg>
<svg class="a" style="left:782px;top:395px" width="16" height="17" viewBox="0 0 16 17"><g fill="#1e88f0"><rect x="6.800" y="-.2" width="2.400" height="3" rx=".6" transform="rotate(0 8 5.800)"/><rect x="6.800" y="-.2" width="2.400" height="3" rx=".6" transform="rotate(45 8 5.800)"/><rect x="6.800" y="-.2" width="2.400" height="3" rx=".6" transform="rotate(90 8 5.800)"/><rect x="6.800" y="-.2" width="2.400" height="3" rx=".6" transform="rotate(135 8 5.800)"/><rect x="6.800" y="-.2" width="2.400" height="3" rx=".6" transform="rotate(180 8 5.800)"/><rect x="6.800" y="-.2" width="2.400" height="3" rx=".6" transform="rotate(225 8 5.800)"/><rect x="6.800" y="-.2" width="2.400" height="3" rx=".6" transform="rotate(270 8 5.800)"/><rect x="6.800" y="-.2" width="2.400" height="3" rx=".6" transform="rotate(315 8 5.800)"/><circle cx="8" cy="5.800" r="4.700"/></g><circle cx="8" cy="5.800" r="2.100" fill="#fff"/><rect x="7.300" y="10" width="1.400" height="4.500" fill="#1e88f0"/><path d="M1.500 14.800 H14.500" stroke="#3a7be0" stroke-width=".9"/><circle cx="1.500" cy="14.800" r="1.100" fill="#2ed158"/><circle cx="8" cy="14.800" r="1.100" fill="#2ed158"/><circle cx="14.500" cy="14.800" r="1.100" fill="#2ed158"/></svg>
<svg class="a" style="left:626px;top:433px" width="17" height="16" viewBox="0 0 17 16"><defs><linearGradient id="ot" x1="0" x2="1"><stop offset="0" stop-color="#ffc107"/><stop offset=".5" stop-color="#ffc107"/><stop offset=".5" stop-color="#ffa000"/><stop offset="1" stop-color="#ffa000"/></linearGradient></defs><path d="M8.500 .6 Q9.400 .6 9.900 1.600 L16.300 13.200 Q16.900 15 15.200 15.200 H1.800 Q.1 15 .7 13.200 L7.100 1.600 Q7.600 .6 8.500 .6 Z" fill="url(#ot)"/><rect x="7.500" y="4" width="2" height="6.500" rx="1" fill="#4a4a55"/><circle cx="8.500" cy="12.600" r="1.200" fill="#4a4a55"/></svg>
<svg class="a" style="left:792px;top:433px" width="17" height="16" viewBox="0 0 17 16"><g fill="none" stroke="#3fa84a" stroke-width="1.500"><path d="M1.200 7.500 V5.500 Q1.200 3.200 3.500 3.200 H13"/><path d="M15.800 8.500 V10.500 Q15.800 12.800 13.500 12.800 H4"/></g><path d="M12.300 .6 L16 3.200 L12.300 5.800 Z" fill="#3fa84a"/><path d="M4.700 10.200 L1 12.800 L4.700 15.400 Z" fill="#3fa84a"/></svg>
<svg class="a" style="left:932px;top:433px" width="17" height="16" viewBox="0 0 17 16"><path d="M7 2 C7 0 9 -.5 10.500 .5 C12 0 12.500 1.500 11.500 2.500 C10 3.500 8 3.500 7 2 Z" fill="#b8d0e0"/><rect x="13" y="3.500" width="2.600" height="12" fill="#f0b030"/><rect x="13" y="3.500" width="2.600" height="2" fill="#e05a28"/><path d="M.5 15.500 V8 L4.500 10 V8 L8.500 10 V8 L12.500 10 V15.500 Z" fill="#d9662c"/><rect x="0" y="14" width="17" height="2" fill="#8a5a3a"/><g fill="#ffe08a"><rect x="2" y="11.200" width="2" height="1.800"/><rect x="5.500" y="11.200" width="2" height="1.800"/><rect x="9" y="11.200" width="2" height="1.800"/></g></svg>
<svg class="a" style="left:1058px;top:433px" width="18" height="17" viewBox="0 0 18 17"><g transform="rotate(45 9 8.500)"><path d="M5.500 -1.500 H12.500 V2.200 H5.500 Z" fill="#4f9fe0"/><path d="M9 -1.500 H12.500 V2.200 H9 Z" fill="#3a86cf"/><path d="M6.800 2.200 H11.200 V14.500 L9 18.500 L6.800 14.500 Z" fill="#9fd0f5"/><path d="M9 2.200 H11.200 V14.500 L9 18.500 Z" fill="#6db5ea"/><path d="M6.300 5 L11.700 4 M6.300 8 L11.700 7 M6.300 11 L11.700 10 M6.300 14 L11.700 13" stroke="#eaf6ff" stroke-width=".9"/></g></svg>
<svg class="a" style="left:1191px;top:434px" width="17" height="15" viewBox="0 0 17 15"><path d="M3.500 1.500 H12.500 Q14 1.500 14 3 V10.500 Q14 12 12.500 12 H5.500 L2.200 14.300 V12 Q1.200 11.800 1.200 10.500 V3 Q1.200 1.500 3.500 1.500 Z" fill="#f2fdff" stroke="#1ed0f5" stroke-width="2"/><circle cx="7.800" cy="6" r="1.300" fill="#5ab84a"/></svg>
<svg class="a" style="left:1407px;top:433px" width="17" height="17" viewBox="0 0 17 17"><path d="M3.200 5.200 A6.500 6.500 0 1 1 3.200 11.800" fill="none" stroke="#333" stroke-width="1.500"/><path d="M.6 10.800 L3.300 15.200 L5.800 10.600 Z" fill="#333"/><path d="M9 5 V8.800 H12" fill="none" stroke="#333" stroke-width="1.300"/></svg>
<svg class="a" style="left:633px;top:470px" width="16" height="17" viewBox="0 0 16 17"><path d="M2.500 10 L0 15.500 L3.200 14.600 L4.500 17 L7 11.500 Z" fill="#c8421a"/><path d="M13.500 10 L16 15.500 L12.800 14.600 L11.500 17 L9 11.500 Z" fill="#c8421a"/><circle cx="8" cy="7" r="6.800" fill="#ffb300"/><path d="M8 .2 A6.800 6.800 0 0 0 8 13.800 Z" fill="#d8b060"/><path d="M5 7 L7.300 9.300 L11.200 4.800" fill="none" stroke="#2f8a3a" stroke-width="1.600"/></svg>
<svg class="a" style="left:633px;top:496px" width="16" height="16" viewBox="0 0 16 16"><rect x="4.200" y="0" width="7.500" height="7.200" fill="#ff7a45"/><rect x="4.200" y="0" width="7.500" height="2" fill="#ff9a6a"/><rect x="7.200" y="0" width="1.500" height="7.200" fill="#ffb08a"/><rect x="0" y="7.600" width="8" height="8.400" fill="#29b6e8"/><rect x="0" y="7.600" width="8" height="2.200" fill="#1a9bd0"/><rect x="3.300" y="7.600" width="1.400" height="8.400" fill="#7fd8f5"/><rect x="8.200" y="7.600" width="7.800" height="8.400" fill="#ffd23a"/><rect x="12.500" y="7.600" width="3.500" height="8.400" fill="#e0a810"/><rect x="8.200" y="7.600" width="7.800" height="2" fill="#f0bc20"/></svg>
<svg class="a" style="left:633px;top:521px" width="16" height="18" viewBox="0 0 16 18"><path d="M8 0 L14.500 3 L8 6.500 L1.500 3 Z" fill="#1a1aa8"/><path d="M.5 4.500 L8 8 V17.500 L.5 14 Z" fill="#e01010"/><path d="M15.500 4.500 L8 8 V17.500 L15.500 14 Z" fill="#c00808"/><rect x="10" y="8.500" width="3.500" height="5" fill="#f4e8e8" transform="skewY(-25) translate(0 5.500)"/><text x="4" y="14.200" font-family="Liberation Sans,sans-serif" font-weight="bold" font-size="7" text-anchor="middle" fill="#200">M</text></svg>
<svg class="a" style="left:635px;top:550px" width="14" height="13" viewBox="0 0 14 13"><rect x="3.200" y=".4" width="7.600" height="5" rx=".6" fill="#edf3fa" stroke="#aebccc" stroke-width=".7"/><path d="M1.600 4.600 H12.400 Q13.600 4.600 13.600 6 V10 Q13.600 11 12.400 11 H1.600 Q.4 11 .4 10 V6 Q.4 4.600 1.600 4.600 Z" fill="#d6c2b1"/><path d="M.4 7.500 H13.600 V10 Q13.600 11 12.400 11 H1.600 Q.4 11 .4 10 Z" fill="#bfa796"/><circle cx="9.300" cy="6.700" r=".75" fill="#e83020"/><circle cx="11.300" cy="6.700" r=".75" fill="#30a030"/><rect x="3" y="8.600" width="8" height="2.700" fill="#1c1c1c"/><rect x="3.400" y="11.200" width="7.200" height="1.600" rx=".5" fill="#f4f4f4" stroke="#c4c4c4" stroke-width=".5"/></svg>
<svg class="a" style="left:1450px;top:632px" width="11" height="11" viewBox="0 0 11 11"><path d="M1.200 1.200 L9.800 9.800 M9.800 1.200 L1.200 9.800" stroke="#6a6a6a" stroke-width="1.700"/></svg>
<svg class="a" style="left:1791px;top:854px" width="10" height="10" viewBox="0 -2 10 10"><path d="M0 6 L5 0 L10 6 Z" fill="#b0b0b0"/><rect x="0" y="-2" width="10" height="1.200" fill="#b0b0b0"/></svg>
<svg class="a" style="left:1815px;top:854px" width="10" height="10" viewBox="0 -2 10 10"><path d="M0 6 L5 0 L10 6 Z" fill="#b0b0b0"/></svg>
<svg class="a" style="left:1839px;top:854px" width="10" height="10" viewBox="0 -2 10 10"><path d="M0 0 L5 6 L10 0 Z" fill="#b0b0b0"/></svg>
<svg class="a" style="left:1863px;top:854px" width="10" height="10" viewBox="0 -2 10 10"><path d="M0 0 L5 6 L10 0 Z" fill="#b0b0b0"/><rect x="0" y="7" width="10" height="1.200" fill="#b0b0b0"/></svg>
<!--MODAL-->

<div class="a" id="menu"></div>
<div class="a" style="left:90px;top:466px;width:370px;height:29px;background:#fbdb23"></div>
<div class="a mi" style="top:474px;color:#333"><span class="ls" style="letter-spacing:-0.107px">Настройка программы</span></div>
<div class="a mi" style="top:504px"><span class="ls" style="letter-spacing:0.008px">Получение актуальных складских записей</span></div>
<div class="a mi" style="top:534px"><span class="ls" style="letter-spacing:-0.069px">Удаление помеченных объектов</span></div>
<div class="a mi" style="top:564px"><span class="ls" style="letter-spacing:0.04px">Поиск меркурий</span></div>
<div class="a mi" style="top:594px"><span class="ls" style="letter-spacing:-0.024px">Умное гашение</span></div>
<div class="a mi" style="top:624px"><span class="ls" style="letter-spacing:-0.022px">Упрощенная загрузка остатков</span></div>
<!--MENU-->
<div class="a rr" style="left:8px;top:461px;width:85px;height:32px"></div>
<div class="a rr" style="left:123px;top:464px;width:152px;height:35px"></div>
<div class="a rr" style="left:770px;top:385px;width:193px;height:36px"></div>
<div class="a rr" style="left:1045px;top:424px;width:142px;height:35px"></div>
<div class="a rr" style="left:622px;top:490px;width:162px;height:33px"></div>
<div class="a rr" style="left:820px;top:498px;width:27px;height:29px"></div>
<div class="a rr" style="left:1100px;top:697px;width:112px;height:32px"></div>
<div class="a cc" style="left:44.9px;top:501.0px;width:39.2px;height:40.9px"></div>
<div class="a dg" style="left:48.9px;top:509.7px;font-family:'DejaVu Sans Condensed','DejaVu Sans',sans-serif;font-size:22.5px;-webkit-text-stroke:1.1px #ed1c24">1</div>
<div class="a cc" style="left:279.8px;top:459.6px;width:44.2px;height:40.6px"></div>
<div class="a dg" style="left:286.5px;top:466.6px">2</div>
<div class="a cc" style="left:967.0px;top:379.9px;width:40.9px;height:40.9px"></div>
<div class="a dg" style="left:971.5px;top:390.8px">3</div>
<div class="a cc" style="left:1199.7px;top:417.0px;width:39.3px;height:39.8px"></div>
<div class="a dg" style="left:1205.5px;top:425.6px">4</div>
<div class="a cc" style="left:749.2px;top:519.0px;width:38.7px;height:39.8px"></div>
<div class="a dg" style="left:753.6px;top:524.7px">5</div>
<div class="a cc" style="left:818.9px;top:527.0px;width:43.1px;height:39.8px"></div>
<div class="a dg" style="left:823.9px;top:533.9px">6</div>
<div class="a cc" style="left:1216.9px;top:695.6px;width:42.0px;height:38.4px"></div>
<div class="a dg" style="left:1226.0px;top:701.7px">7</div>
<!--ANNOT-->
</div>
</body></html>
